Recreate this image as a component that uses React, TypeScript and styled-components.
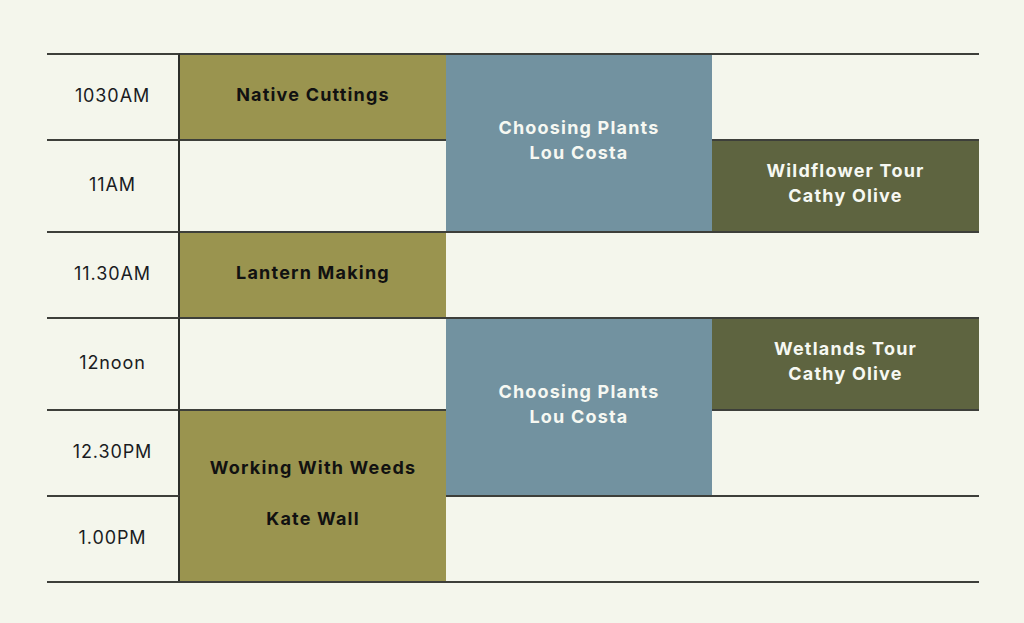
import React, {FC} from 'react';
import styled, {createGlobalStyle} from "styled-components";

type Tone = 'olive' | 'slate' | 'moss' | 'empty'

interface ISlot {
    col: number
    row: number
    span?: number
    tone: Tone
    lines?: string[]
    gap?: boolean
}

const times = ['1030AM', '11AM', '11.30AM', '12noon', '12.30PM', '1.00PM']

const slots: ISlot[] = [
    {col: 2, row: 1, tone: 'olive', lines: ['Native Cuttings']},
    {col: 2, row: 2, tone: 'empty'},
    {col: 2, row: 3, tone: 'olive', lines: ['Lantern Making']},
    {col: 2, row: 4, tone: 'empty'},
    {col: 2, row: 5, span: 2, tone: 'olive', lines: ['Working With Weeds', 'Kate Wall'], gap: true},

    {col: 3, row: 1, span: 2, tone: 'slate', lines: ['Choosing Plants', 'Lou Costa']},
    {col: 3, row: 3, tone: 'empty'},
    {col: 3, row: 4, span: 2, tone: 'slate', lines: ['Choosing Plants', 'Lou Costa']},
    {col: 3, row: 6, tone: 'empty'},

    {col: 4, row: 1, tone: 'empty'},
    {col: 4, row: 2, tone: 'moss', lines: ['Wildflower Tour', 'Cathy Olive']},
    {col: 4, row: 3, tone: 'empty'},
    {col: 4, row: 4, tone: 'moss', lines: ['Wetlands Tour', 'Cathy Olive']},
    {col: 4, row: 5, tone: 'empty'},
    {col: 4, row: 6, tone: 'empty'},
]

const toneBg: Record<Tone, string> = {
    olive: '#9a944f',
    slate: '#7292a0',
    moss: '#5e6440',
    empty: 'transparent',
}

const toneText: Record<Tone, string> = {
    olive: '#111111',
    slate: '#f6f8f2',
    moss: '#f6f8f2',
    empty: '#111111',
}

const App: FC = () => {
    return (
        <>
            <GlobalStyle/>
            <Page>
                <Schedule>
                    {times.map((t, i) => (
                        <TimeCell key={t} style={{gridRow: i + 1}}>{t}</TimeCell>
                    ))}
                    {slots.map((s, i) => (
                        <Slot key={i}
                              tone={s.tone}
                              style={{gridColumn: s.col, gridRow: `${s.row} / span ${s.span || 1}`}}>
                            {s.lines && (
                                <SlotText tone={s.tone} gap={!!s.gap}>
                                    {s.lines.map(l => <span key={l}>{l}</span>)}
                                </SlotText>
                            )}
                        </Slot>
                    ))}
                </Schedule>
            </Page>
        </>
    )
}

export default App;

const GlobalStyle = createGlobalStyle`
  html, body {
    margin: 0;
    padding: 0;
    background: #f4f6ec;
  }
`

const Page = styled.div`
  width: 1024px;
  height: 623px;
  background: #f4f6ec;
  padding: 53px 0 0 47px;
  box-sizing: border-box;
  font-family: Inter, "Liberation Sans", sans-serif;
`

const Schedule = styled.div`
  display: grid;
  width: 932px;
  grid-template-columns: 133px 266px 266px 267px;
  grid-template-rows: 86px 92px 86px 92px 86px 86px;
  border-bottom: 2px solid #3d3f3a;
`

const TimeCell = styled.div`
  grid-column: 1;
  border-top: 2px solid #3d3f3a;
  border-right: 2px solid #2c2e2a;
  display: flex;
  align-items: center;
  justify-content: center;
  font-size: 18px;
  color: #1a1c1f;
  letter-spacing: 0.9px;
  padding-bottom: 3px;
`

const Slot = styled.div<{ tone: Tone }>`
  border-top: 2px solid #3d3f3a;
  background-color: ${({tone}) => toneBg[tone]};
  display: flex;
  align-items: center;
  justify-content: center;
`

const SlotText = styled.div<{ tone: Tone, gap: boolean }>`
  display: flex;
  flex-direction: column;
  align-items: center;
  gap: ${({gap}) => gap ? '26px' : '0'};
  color: ${({tone}) => toneText[tone]};
  font-weight: 700;
  font-size: 18px;
  line-height: 25px;
  letter-spacing: 1.2px;
  padding-bottom: 6px;
`
